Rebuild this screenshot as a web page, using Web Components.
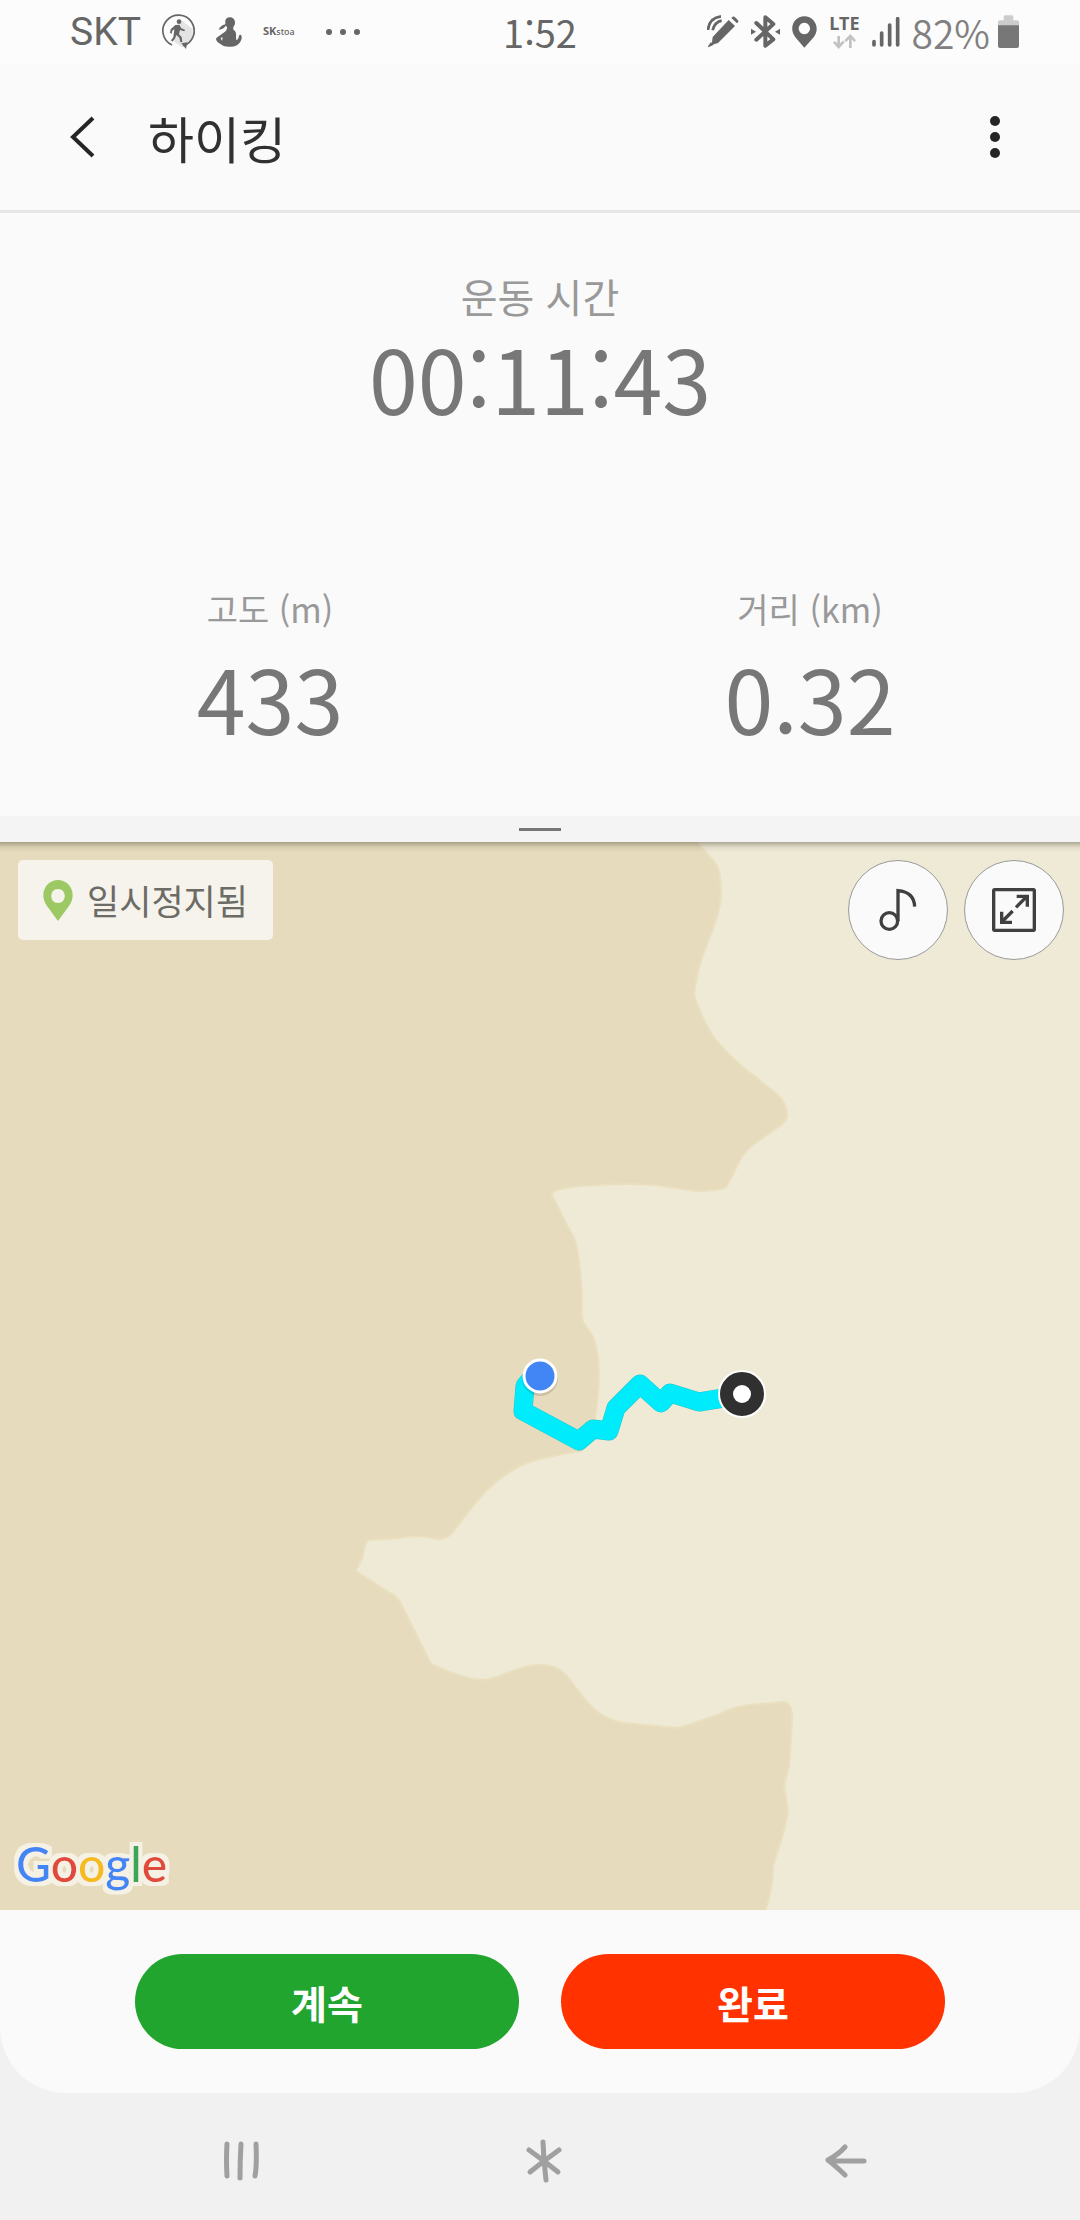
<!DOCTYPE html>
<html lang="ko">
<head>
<meta charset="UTF-8">
<meta name="viewport" content="width=device-width, initial-scale=1">
<title>하이킹</title>
<style>
    body {
        margin: 0;
        background-color: #f1f1f1;
        font-family: "Noto Sans CJK KR", sans-serif;
        font-variant-ligatures: no-contextual;
    }
</style>
</head>
<body>
<hiking-app>
    <status-bar slot="estado" carrier="SKT" time="1:52" battery="82%"></status-bar>
    <app-header slot="cabecera">하이킹</app-header>
    <workout-stats slot="datos">
        <stat-item slot="principal" size="big" label="운동 시간" value="00:11:43"></stat-item>
        <stat-item label="고도 (m)" value="433"></stat-item>
        <stat-item label="거리 (km)" value="0.32"></stat-item>
    </workout-stats>
    <route-map slot="mapa">일시정지됨</route-map>
    <action-bar slot="acciones">
        <action-button kind="continue">계속</action-button>
        <action-button kind="finish">완료</action-button>
    </action-bar>
    <system-nav slot="navegacion"></system-nav>
</hiking-app>

<script>
class HikingApp extends HTMLElement {
    constructor() {
        super();
        this.attachShadow({ mode: 'open' });
    }

    connectedCallback() {
        this.shadowRoot.innerHTML = `
            <style>
                :host {
                    display: flex;
                    flex-direction: column;
                    min-height: 100vh;
                }
                main {
                    flex: 1;
                    display: flex;
                    flex-direction: column;
                    background-color: #fafafa;
                    border-radius: 0 0 66px 66px;
                }
            </style>
            <slot name="estado"></slot>
            <main>
                <slot name="cabecera"></slot>
                <slot name="datos"></slot>
                <slot name="mapa"></slot>
                <slot name="acciones"></slot>
            </main>
            <slot name="navegacion"></slot>
        `;
    }
}

class StatusBar extends HTMLElement {
    constructor() {
        super();
        this.attachShadow({ mode: 'open' });
    }

    connectedCallback() {
        this.shadowRoot.innerHTML = `
            <style>
                :host {
                    display: grid;
                    grid-template-columns: 1fr auto 1fr;
                    align-items: center;
                    height: 63px;
                    padding: 0 61px 0 70px;
                    background-color: #fcfcfc;
                    color: #666;
                    font-size: 38px;
                    line-height: 56px;
                }
                .left, .right {
                    display: flex;
                    align-items: center;
                }
                .right {
                    justify-content: flex-end;
                    gap: 12px;
                }
                svg { display: block; fill: #666; flex: none; }
                .carrier {
                    font-family: Roboto, sans-serif;
                    font-size: 39px;
                    margin-right: 20px;
                }
                .store {
                    font: bold 11px/14px "Noto Sans", sans-serif;
                    margin: 0 31px 0 21px;
                }
                .store small { font-size: 9px; font-weight: 500; }
                .woman { margin-left: 21px; }
                .time { margin-left: -9px; }
                .level {
                    margin-right: -4px;
                    color: #808080;
                    font-size: 39px;
                    font-weight: 350;
                }
                .net {
                    display: flex;
                    flex-direction: column;
                    align-items: center;
                    font: bold 18px/16px "Noto Sans", sans-serif;
                    gap: 3px;
                }
            </style>
            <div class="left">
                <span class="carrier">${this.getAttribute('carrier')}</span>
                <svg width="34" height="36" viewBox="333 45 102 108">
                    <path d="M392 62L428 90Q432 130 396 145L372 128Z" fill="#e4e4e4"/>
                    <path d="M366 138A47 47 0 1 1 400 140" fill="none" stroke="#666" stroke-width="5"/>
                    <path d="M394 133L412 130L408 150Z"/>
                    <circle cx="387" cy="68" r="7"/>
                    <path d="M376 78L388 77L394 88L405 92L403 97L390 93L387 106L395 114L397 129L391 130L388 116L379 108L375 119L367 128L363 124L370 115L373 91L367 95L365 104L360 102L362 91Z"/>
                </svg>
                <svg class="woman" width="26" height="30" viewBox="496 53 78 90">
                    <path d="M524 70C520 48 554 48 553 70Q553 78 548 83V91Q558 96 556 112L557 123Q565 119 565 108L571 106Q577 119 567 130Q558 142 541 142Q520 143 514 137Q498 129 496 120Q496 116 500 114L523 97Q530 94 529 83L525 79Q520 89 504 91Q509 79 524 75ZM510 117L514 124Q516 118 515 113Z"/>
                </svg>
                <span class="store">SK<small>stoa</small></span>
                <svg width="34" height="8" viewBox="0 0 34 8">
                    <circle cx="3" cy="4" r="3"/><circle cx="17" cy="4" r="3"/><circle cx="31" cy="4" r="3"/>
                </svg>
            </div>
            <div class="time">${this.getAttribute('time')}</div>
            <div class="right">
                <svg width="32" height="33" viewBox="57 46 96 99">
                    <path d="M122 61L141 79L90 130L71 136L74 112ZM69 127L76 136L61 143Q59 142 61 138ZM130 55L136 50Q147 55 152 65L147 71Z"/>
                    <path d="M60 91Q63 55 99 50M74 92Q79 68 101 63" fill="none" stroke="#666" stroke-width="8"/>
                </svg>
                <svg width="29" height="33" viewBox="180 47 87 99">
                    <path d="M196 71L247 120L223 139V54L247 74L196 121" fill="none" stroke="#666" stroke-width="12" stroke-linejoin="round" stroke-linecap="round"/>
                    <path d="M180 88L195 97L180 106ZM267 88L252 97L267 106Z"/>
                </svg>
                <svg width="25" height="32" viewBox="303 50 75 95">
                    <path fill-rule="evenodd" d="M340 145L313 113C292 86 309 50 340 50S389 86 368 113ZM340 70a17 17 0 1 0 .1 0Z"/>
                </svg>
                <div class="net">
                    LTE
                    <svg width="23" height="15" viewBox="427 102 69 45">
                        <path d="M440 108H448V130L457 122L462 127L444 147L427 128L432 123L440 130ZM475 144H483V118L491 126L496 121L479 102L461 121L466 126L475 118Z" fill="#c2c2c2"/>
                    </svg>
                </div>
                <svg width="28" height="30" viewBox="545 53 84 90">
                    <path d="M551 127V137M574 101V137M598 77V137M622 58V137" stroke="#666" stroke-width="11" stroke-linecap="round"/>
                </svg>
                <span class="level">${this.getAttribute('battery')}</span>
                <svg width="21" height="33" viewBox="924 47 63 99">
                    <path d="M924 80V68Q924 63 929 63H941V53Q941 48 946 48H965Q970 48 970 53V63H982Q987 63 987 68V80Z" fill="#ccc"/>
                    <path d="M924 78H987V140Q987 146 981 146H930Q924 146 924 140Z" fill="#777"/>
                </svg>
            </div>
        `;
    }
}

class AppHeader extends HTMLElement {
    constructor() {
        super();
        this.attachShadow({ mode: 'open' });
    }

    connectedCallback() {
        this.shadowRoot.innerHTML = `
            <style>
                :host {
                    display: flex;
                    align-items: center;
                    height: 147px;
                    padding: 0 51px 0 48px;
                    border-bottom: 3px solid #e6e6e6;
                }
                button {
                    display: grid;
                    place-items: center;
                    width: 68px;
                    height: 68px;
                    padding: 0;
                    border: 0;
                    background: none;
                }
                h1 {
                    flex: 1;
                    margin: 0 0 0 32px;
                    font-size: 50px;
                    font-weight: 400;
                    line-height: 70px;
                    color: #303030;
                }
            </style>
            <button type="button" aria-label="뒤로">
                <svg width="28" height="42" viewBox="0 0 28 42">
                    <path d="M25 2L5 21L25 40" fill="none" stroke="#252525" stroke-width="4"/>
                </svg>
            </button>
            <h1><slot></slot></h1>
            <button type="button" aria-label="더보기">
                <svg width="10" height="42" viewBox="0 0 10 42" fill="#252525">
                    <circle cx="5" cy="5" r="5"/><circle cx="5" cy="21" r="5"/><circle cx="5" cy="37" r="5"/>
                </svg>
            </button>
        `;
    }
}

class StatItem extends HTMLElement {
    constructor() {
        super();
        this.attachShadow({ mode: 'open' });
    }

    connectedCallback() {
        this.shadowRoot.innerHTML = `
            <style>
                :host {
                    display: flex;
                    flex-direction: column;
                    align-items: center;
                    gap: 13px;
                }
                :host([size="big"]) { gap: 0; }
                .label {
                    font-size: 34px;
                    line-height: 48px;
                    color: #999;
                }
                :host([size="big"]) .label {
                    font-size: 40px;
                    line-height: 60px;
                }
                .value {
                    font-size: 88px;
                    line-height: 102px;
                    color: #777;
                }
            </style>
            <div class="label">${this.getAttribute('label')}</div>
            <div class="value">${this.getAttribute('value')}</div>
        `;
    }
}

class WorkoutStats extends HTMLElement {
    constructor() {
        super();
        this.attachShadow({ mode: 'open' });
    }

    connectedCallback() {
        this.shadowRoot.innerHTML = `
            <style>
                :host { display: block; }
                .panel { padding: 53px 0 68px; }
                .row {
                    display: grid;
                    grid-template-columns: 1fr 1fr;
                    margin-top: 157px;
                }
                .handle {
                    display: grid;
                    place-items: center;
                    height: 26px;
                    background-color: #f4f4f4;
                }
                .handle span {
                    width: 42px;
                    height: 3px;
                    background-color: #777;
                }
            </style>
            <div class="panel">
                <slot name="principal"></slot>
                <div class="row"><slot></slot></div>
            </div>
            <div class="handle"><span></span></div>
        `;
    }
}

class RouteMap extends HTMLElement {
    constructor() {
        super();
        this.attachShadow({ mode: 'open' });
    }

    connectedCallback() {
        this.shadowRoot.innerHTML = `
            <style>
                :host {
                    flex: 1;
                    display: flex;
                    flex-direction: column;
                    justify-content: space-between;
                    position: relative;
                    min-height: 600px;
                    background-color: #efead6;
                }
                .terrain {
                    position: absolute;
                    inset: 0;
                    width: 100%;
                    height: 100%;
                }
                .shade {
                    position: absolute;
                    inset: 0 0 auto;
                    height: 10px;
                    background: linear-gradient(rgba(70, 70, 50, .4), rgba(70, 70, 50, .1) 50%, transparent);
                }
                .top {
                    position: relative;
                    display: flex;
                    align-items: flex-start;
                    gap: 16px;
                    padding: 18px 16px 0 18px;
                }
                .state {
                    display: flex;
                    align-items: center;
                    gap: 14px;
                    height: 80px;
                    margin-right: auto;
                    padding: 0 25px;
                    border-radius: 5px;
                    background-color: #f5f3ec;
                    color: #6c6b65;
                    font-size: 35px;
                    line-height: 48px;
                }
                button {
                    display: grid;
                    place-items: center;
                    width: 100px;
                    height: 100px;
                    padding: 0;
                    border: 1px solid #999;
                    border-radius: 50%;
                    background-color: #fafafa;
                }
                .logo {
                    position: relative;
                    display: block;
                    margin: 0 0 8px 10px;
                    overflow: visible;
                    font-family: Lato, sans-serif;
                    font-size: 48px;
                }
            </style>
            <svg class="terrain" viewBox="0 842 1080 1068" preserveAspectRatio="xMidYMid slice">
                <path fill="#e6dbbc" stroke="#eadfbf" stroke-width="2" d="M-4 838H694L697 842L710 857Q720 866 720 880Q723 896 717 917Q713 930 707 944Q697 968 694 995Q700 1015 713 1036Q728 1055 743 1067L778 1095Q787 1104 787 1116Q786 1122 778 1127L757 1142Q746 1149 740 1160L727 1186Q725 1190 697 1191L663 1186Q635 1182 580 1186Q549 1189 552 1195L568 1227Q577 1240 578 1255Q582 1280 582 1308Q581 1320 585 1325Q594 1336 596 1346Q602 1375 595 1418L582 1451Q540 1457 522 1465Q502 1475 485 1492Q470 1509 453 1532Q446 1540 437 1539Q420 1534 400 1538L368 1540Q364 1545 363 1556L356 1571L390 1593Q396 1595 400 1602L431 1664Q450 1673 465 1677Q483 1683 500 1676Q530 1662 550 1666Q562 1668 571 1681Q582 1697 595 1710Q608 1720 623 1723L678 1728Q690 1725 720 1714Q735 1706 750 1705L783 1702Q793 1702 792 1722L789 1766L784 1786L788 1811Q786 1824 780 1844L773 1866Q773 1890 764 1914H-4Z"/>
                <path fill="none" stroke="#21c5cb" stroke-width="19" stroke-linejoin="round" d="M534 1375L525 1386L523 1411L579 1441L593 1429L609 1431L616 1408L640 1384L661 1403L670 1393L699 1402L730 1397"/>
                <path fill="none" stroke="#00ecfc" stroke-width="18" stroke-linejoin="round" d="M534 1375L525 1386L523 1411L579 1441L593 1429L609 1431L616 1408L640 1384L661 1403L670 1393L699 1402L730 1397"/>
                <circle cx="540" cy="1378" r="18" fill="#000" opacity=".12"/>
                <circle cx="540" cy="1376" r="16" fill="#4285f4" stroke="#fff" stroke-width="3"/>
                <circle cx="742" cy="1394" r="23" fill="#303030" stroke="#fff" stroke-width="2"/>
                <circle cx="742" cy="1394" r="9" fill="#fff"/>
            </svg>
            <div class="shade"></div>
            <div class="top">
                <div class="state">
                    <svg width="30" height="41" viewBox="0 0 30 41">
                        <path fill="#9dc964" fill-rule="evenodd" d="M15 41L4 26C-5 13 4 0 15 0S35 13 26 26ZM15 9C6 9 6 23 15 23S24 9 15 9Z"/>
                    </svg>
                    <slot></slot>
                </div>
                <button type="button" aria-label="음악">
                    <svg width="38" height="44" viewBox="178 144 114 132" fill="none" stroke="#404040" stroke-width="10">
                        <circle cx="209" cy="243" r="25"/>
                        <path d="M235 243V152Q283 156 285 200"/>
                    </svg>
                </button>
                <button type="button" aria-label="전체 화면">
                    <svg width="44" height="44" viewBox="516 144 132 132" fill="none" stroke="#404040" stroke-width="10">
                        <rect x="521" y="149" width="122" height="122" rx="3"/>
                        <path d="M588 202L620 170M590 169H622V200M578 213L545 246M545 215V247H576"/>
                    </svg>
                </button>
            </div>
            <svg class="logo" width="164" height="68" viewBox="0 0 164 68" role="img" aria-label="Google">
                <filter id="halo" x="-10%" y="-20%" width="120%" height="140%">
                    <feMorphology in="SourceAlpha" operator="dilate" radius="4" result="fat"/>
                    <feFlood flood-color="#f5f1e4"/>
                    <feComposite in2="fat" operator="in"/>
                    <feMerge><feMergeNode/><feMergeNode in="SourceGraphic"/></feMerge>
                </filter>
                <text x="6" y="48" filter="url(#halo)" font-weight="500"><tspan fill="#4285f4">G</tspan><tspan fill="#e04a3a">o</tspan><tspan fill="#f6bb1c">o</tspan><tspan fill="#4285f4">g</tspan><tspan fill="#3aa757">l</tspan><tspan fill="#e04a3a">e</tspan></text>
            </svg>
        `;
    }
}

class ActionBar extends HTMLElement {
    constructor() {
        super();
        this.attachShadow({ mode: 'open' });
    }

    connectedCallback() {
        this.shadowRoot.innerHTML = `
            <style>
                :host {
                    display: grid;
                    grid-template-columns: 1fr 1fr;
                    gap: 42px;
                    padding: 44px 135px;
                }
            </style>
            <slot></slot>
        `;
    }
}

class ActionButton extends HTMLElement {
    constructor() {
        super();
        this.attachShadow({ mode: 'open' });
    }

    connectedCallback() {
        this.shadowRoot.innerHTML = `
            <style>
                :host {
                    display: block;
                    --fondo: #22a52e;
                }
                :host([kind="finish"]) { --fondo: #ff3200; }
                button {
                    display: block;
                    width: 100%;
                    height: 95px;
                    border: 0;
                    border-radius: 48px;
                    background-color: var(--fondo);
                    color: #fff;
                    font: bold 39px/56px "Noto Sans CJK KR", sans-serif;
                }
            </style>
            <button type="button"><slot></slot></button>
        `;
    }
}

class SystemNav extends HTMLElement {
    constructor() {
        super();
        this.attachShadow({ mode: 'open' });
    }

    connectedCallback() {
        this.shadowRoot.innerHTML = `
            <style>
                :host {
                    display: flex;
                    justify-content: space-between;
                    align-items: center;
                    height: 119px;
                    padding: 8px 202px 0 209px;
                }
                button {
                    display: grid;
                    place-items: center;
                    width: 64px;
                    height: 64px;
                    padding: 0;
                    border: 0;
                    background: none;
                }
                svg {
                    fill: none;
                    stroke: #a0a0a0;
                    stroke-width: 5;
                    stroke-linecap: round;
                    stroke-linejoin: round;
                }
            </style>
            <button type="button" aria-label="최근 앱">
                <svg width="38" height="42" viewBox="0 0 38 42">
                    <path d="M5 4Q4 20 5 36M19 4Q18 20 18 38M34 4Q35 26 33 36"/>
                </svg>
            </button>
            <button type="button" aria-label="홈">
                <svg width="38" height="46" viewBox="0 0 38 46">
                    <path d="M18 4L19 22L21 42M4 12L19 23L33 34M34 12L19 23L5 34"/>
                </svg>
            </button>
            <button type="button" aria-label="뒤로">
                <svg width="42" height="36" viewBox="0 0 42 36">
                    <path d="M20 4Q14 11 3 17Q13 25 20 32M4 18H39"/>
                </svg>
            </button>
        `;
    }
}

customElements.define('hiking-app', HikingApp);
customElements.define('status-bar', StatusBar);
customElements.define('app-header', AppHeader);
customElements.define('stat-item', StatItem);
customElements.define('workout-stats', WorkoutStats);
customElements.define('route-map', RouteMap);
customElements.define('action-bar', ActionBar);
customElements.define('action-button', ActionButton);
customElements.define('system-nav', SystemNav);
</script>
</body>
</html>
